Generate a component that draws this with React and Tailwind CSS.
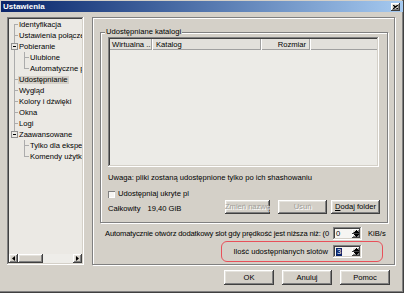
import React from 'react';

const RAISED =
  'shadow-[inset_-1px_-1px_#404040,inset_1px_1px_#ffffff,inset_-2px_-2px_#808080,inset_2px_2px_#e4e2dc]';
const SUNKEN =
  'shadow-[inset_-1px_-1px_#ffffff,inset_1px_1px_#808080,inset_-2px_-2px_#d4d0c8,inset_2px_2px_#404040]';
const ETCHED = 'border border-[#808080] shadow-[1px_1px_0_#ffffff,inset_1px_1px_0_#ffffff]';

const TREE = [
  { t: 'Identyfikacja', l: 1, first: true },
  { t: 'Ustawienia połączenia', l: 1 },
  { t: 'Pobieranie', l: 1, box: true },
  { t: 'Ulubione', l: 2 },
  { t: 'Automatyczne pobieranie', l: 2, last2: true },
  { t: 'Udostępnianie', l: 1, sel: true },
  { t: 'Wygląd', l: 1 },
  { t: 'Kolory i dźwięki', l: 1 },
  { t: 'Okna', l: 1 },
  { t: 'Logi', l: 1 },
  { t: 'Zaawansowane', l: 1, box: true, last: true },
  { t: 'Tylko dla ekspertów', l: 2, noL1: true },
  { t: 'Komendy użytkownika', l: 2, noL1: true, last2: true },
];

function Conn({ it }) {
  const c = '#acacac';
  if (it.l === 1) {
    return (
      <svg width="9" height="11" className="shrink-0" shapeRendering="crispEdges">
        <line x1="5.5" y1={it.first ? 5 : 0} x2="5.5" y2={it.last ? 6 : 11} stroke={c} />
        <line x1="5" y1="5.5" x2="9" y2="5.5" stroke={c} />
        {it.box && (
          <>
            <rect x="2.5" y="2.5" width="6" height="6" fill="#ebe9e4" stroke="#909090" />
            <line x1="4" y1="5.5" x2="7" y2="5.5" stroke="#000" />
          </>
        )}
      </svg>
    );
  }
  return (
    <svg width="20" height="11" className="shrink-0" shapeRendering="crispEdges">
      {!it.noL1 && <line x1="5.5" y1="0" x2="5.5" y2="11" stroke={c} />}
      <line x1="15.5" y1="0" x2="15.5" y2={it.last2 ? 6 : 11} stroke={c} />
      <line x1="15" y1="5.5" x2="20" y2="5.5" stroke={c} />
    </svg>
  );
}

function Arrow({ dir }) {
  return (
    <svg width="5" height="3" viewBox="0 0 5 3" shapeRendering="crispEdges">
      {dir === 'up' ? (
        <polygon points="2.5,0 5,3 0,3" fill="#000" />
      ) : (
        <polygon points="0,0 5,0 2.5,3" fill="#000" />
      )}
    </svg>
  );
}

function Spin({ value, selected }) {
  return (
    <div className={`flex h-[13px] w-[29px] shrink-0 bg-[#f6f5f2] p-[2px] ${SUNKEN}`}>
      <div className="flex flex-1 items-center pl-[1px] leading-[8px]">
        {selected ? (
          <span className="bg-[#0a246a] px-[1px] text-white">{value}</span>
        ) : (
          <span>{value}</span>
        )}
      </div>
      <div className="flex w-[8px] flex-col">
        <div className={`flex flex-1 items-center justify-center bg-[#d4d0c8] ${RAISED}`}>
          <Arrow dir="up" />
        </div>
        <div className={`flex flex-1 items-center justify-center bg-[#d4d0c8] ${RAISED}`}>
          <Arrow dir="down" />
        </div>
      </div>
    </div>
  );
}

function Btn({ children, disabled, w, h = 'h-[14px]', u }) {
  return (
    <div
      className={`flex ${h} ${w} items-center justify-center overflow-hidden whitespace-nowrap bg-[#d4d0c8] ${RAISED} ${
        disabled ? 'text-[#a09e99] [text-shadow:1px_1px_0_#ffffff]' : 'text-black'
      }`}
    >
      {u ? (
        <span>
          <span className="underline">{children[0]}</span>
          {children.slice(1)}
        </span>
      ) : (
        children
      )}
    </div>
  );
}

function HScroll() {
  return (
    <div className="flex h-[9px] shrink-0">
      <div className={`flex w-[9px] items-center justify-center bg-[#d4d0c8] ${RAISED}`}>
        <svg width="3" height="5" viewBox="0 0 3 5">
          <polygon points="3,0 3,5 0,2.5" fill="#000" />
        </svg>
      </div>
      <div className={`w-[25px] bg-[#d4d0c8] ${RAISED}`} />
      <div className="flex-1 bg-[#eeede9]" />
      <div className={`flex w-[9px] items-center justify-center bg-[#d4d0c8] ${RAISED}`}>
        <svg width="3" height="5" viewBox="0 0 3 5">
          <polygon points="0,0 3,2.5 0,5" fill="#000" />
        </svg>
      </div>
    </div>
  );
}

export default function App() {
  return (
    <div className="flex h-[293px] w-[404px] flex-col bg-[#d4d0c8] font-['Liberation_Sans',Arial,sans-serif] text-[7.6px] text-black shadow-[inset_-1px_-1px_#404040,inset_-2px_-2px_#808080]">
      {/* title bar */}
      <div className="mx-[1px] mt-[1px] flex h-[11px] items-center bg-gradient-to-r from-[#0a246a] to-[#a6caf0] pl-[2px] pr-[3px]">
        <span className="text-[8px] font-bold leading-[11px] text-white">Ustawienia</span>
        <div className={`ml-auto mt-[1px] flex h-[8px] w-[9px] items-center justify-center bg-[#d4d0c8] ${RAISED}`}>
          <svg width="5" height="4" viewBox="0 0 5 4">
            <path d="M0 0 L5 4 M5 0 L0 4" stroke="#000" strokeWidth="1.3" />
          </svg>
        </div>
      </div>

      {/* body */}
      <div className="ml-[7px] mt-[5px] flex gap-[8px]">
        {/* tree */}
        <div className={`flex h-[248px] w-[77px] flex-col bg-[#ebe9e4] p-[2px] ${SUNKEN}`}>
          <div className="flex-1 overflow-hidden">
            {TREE.map((it) => (
              <div key={it.t} className="flex h-[11px] items-center whitespace-nowrap leading-[11px]">
                <Conn it={it} />
                <span className={`px-[1px] leading-[8px] ${it.sel ? 'bg-[#d4d0c8]' : ''}`}>{it.t}</span>
              </div>
            ))}
          </div>
          <HScroll />
        </div>

        {/* right panel */}
        <div className={`flex h-[248px] w-[303px] flex-col pl-[7px] pr-[6px] pt-[9px] ${ETCHED}`}>
          <fieldset className={`h-[196px] px-[7px] pb-[7px] ${ETCHED}`}>
            <legend className="-ml-[3px] bg-[#d4d0c8] px-[1px] leading-[10px]">Udostępniane katalogi</legend>
            <div className="flex flex-col">
              {/* listview */}
              <div className={`h-[130px] w-[271px] bg-[#ecebe7] p-[2px] ${SUNKEN}`}>
                <div className="flex h-[11px] bg-[#e2e0db] leading-[11px] shadow-[inset_0_-1px_#a0a0a0]">
                  <div className="w-[42px] overflow-hidden whitespace-nowrap border-r border-[#a0a0a0] pl-[2px] shadow-[1px_0_#ffffff]">
                    Wirtualna ...
                  </div>
                  <div className="w-[109px] border-r border-[#a0a0a0] pl-[4px] shadow-[1px_0_#ffffff]">Katalog</div>
                  <div className="w-[49px] border-r border-[#a0a0a0] pr-[3px] text-right shadow-[1px_0_#ffffff]">
                    Rozmiar
                  </div>
                  <div className="flex-1" />
                </div>
              </div>
              <div className="mt-[6px] leading-[10px]">
                Uwaga: pliki zostaną udostępnione tylko po ich shashowaniu
              </div>
              <div className="mt-[6px] flex h-[10px] items-center leading-[10px]">
                <div className="h-[7px] w-[7px] bg-[#f6f5f2] shadow-[inset_1px_1px_#808080,inset_-1px_-1px_#ffffff]" />
                <span className="ml-[3px]">Udostępniaj ukryte pl</span>
              </div>
              <div className="mt-[1px] flex h-[14px] items-end leading-[10px]">
                <span>Całkowity</span>
                <span className="ml-[7px]">19,40 GiB</span>
                <div className="ml-auto flex items-center">
                  <Btn disabled w="w-[45px]">Zmień nazwę</Btn>
                  <div className="ml-[8px]">
                    <Btn disabled w="w-[49px]">Usuń</Btn>
                  </div>
                  <div className="ml-[4px]">
                    <Btn w="w-[49px]" u>
                      Dodaj folder
                    </Btn>
                  </div>
                </div>
              </div>
            </div>
          </fieldset>

          {/* auto slot row */}
          <div className="mt-[4px] flex h-[13px] items-center pl-[5px]">
            <span className="w-[226px] shrink-0 whitespace-nowrap leading-[10px] tracking-[-0.15px]">
              Automatycznie otwórz dodatkowy slot gdy prędkość jest niższa niż: (0
            </span>
            <div className="ml-[2px]">
              <Spin value="0" />
            </div>
            <span className="ml-[6px] leading-[10px]">KiB/s</span>
          </div>

          {/* slots row */}
          <div className="ml-[121px] mt-[1px] flex h-[21px] w-[162px] items-center justify-end rounded-[6px] border border-[#e8505a] pr-[20px]">
            <span className="leading-[10px]">Ilość udostępnianych slotów</span>
            <div className="ml-[5px]">
              <Spin value="3" selected />
            </div>
          </div>
        </div>
      </div>

      {/* bottom buttons */}
      <div className="mr-[14px] mt-[5px] flex justify-end gap-[8px]">
        <Btn w="w-[50px]" h="h-[15px]">OK</Btn>
        <Btn w="w-[50px]" h="h-[15px]">Anuluj</Btn>
        <Btn w="w-[50px]" h="h-[15px]">Pomoc</Btn>
      </div>
    </div>
  );
}
